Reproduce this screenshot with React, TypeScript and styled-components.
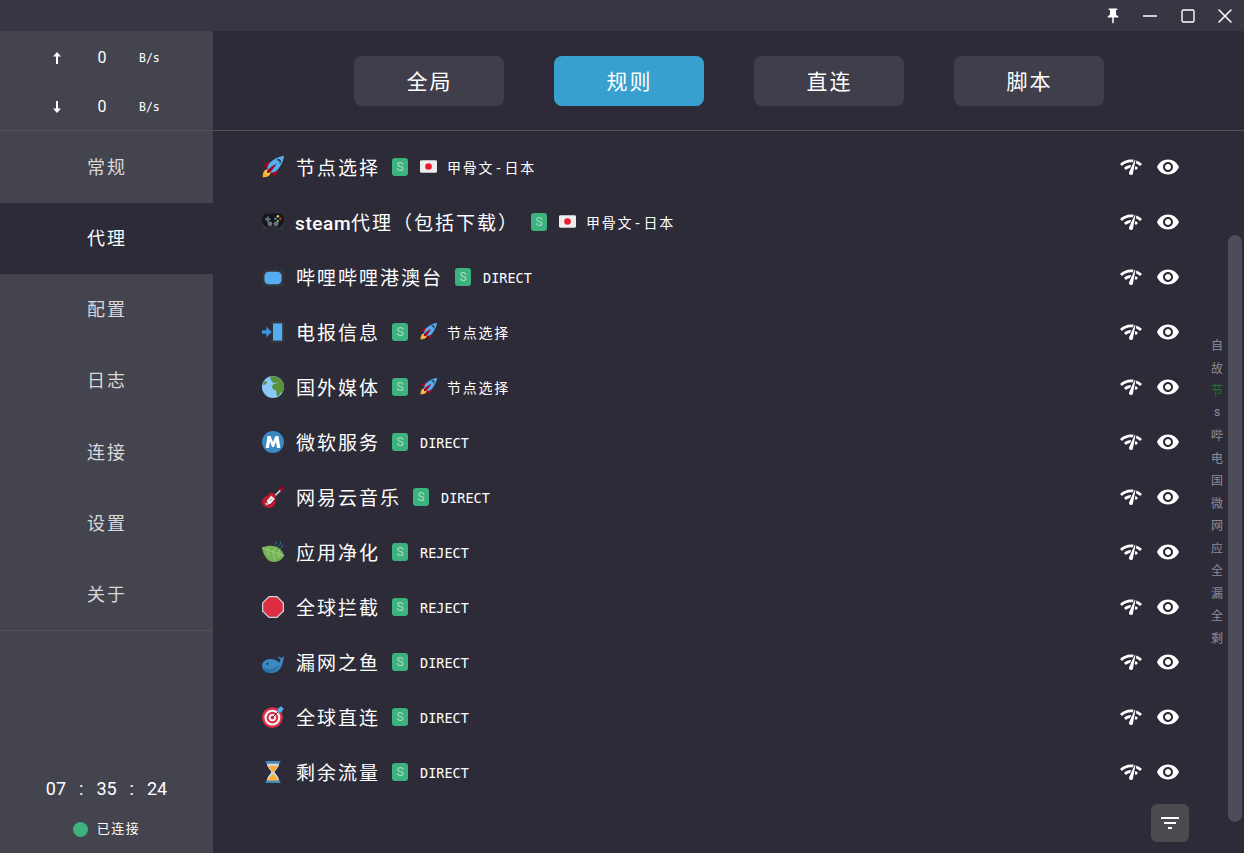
import React from "react";
import styled, { createGlobalStyle } from "styled-components";

const CJK = `"Noto Sans CJK SC"`;
const MONO = `"DejaVu Sans Mono"`;

const GlobalStyle = createGlobalStyle`
  html, body {
    margin: 0;
    height: 100%;
    overflow: hidden;
    background: #2d2b38;
  }
  * {
    box-sizing: border-box;
  }
`;

const Page = styled.div`
  display: flex;
  flex-direction: column;
  width: 100vw;
  height: 100vh;
  color: #fff;
  font-family: Roboto, ${CJK}, sans-serif;
`;

const TitleBar = styled.div`
  display: flex;
  justify-content: flex-end;
  align-items: center;
  flex: 0 0 31px;
  background: #373643;
`;

const TitleButton = styled.div`
  display: flex;
  justify-content: center;
  align-items: center;
  width: 37.5px;
  height: 31px;
`;

const Body = styled.div`
  display: flex;
  flex: 1;
  min-height: 0;
`;

const Sidebar = styled.aside`
  display: flex;
  flex-direction: column;
  flex: 0 0 213px;
  background: #2d2b38;
`;

const SpeedBlock = styled.div`
  display: flex;
  flex-direction: column;
  justify-content: center;
  gap: 28px;
  height: 100px;
  padding: 4px 0 0 47px;
  background: #44444f;
  border-bottom: 1px solid #57514f;
`;

const SpeedRow = styled.div`
  display: grid;
  grid-template-columns: 20px 20px auto;
  column-gap: 25px;
  align-items: center;
  height: 21px;
`;

const SpeedArrow = styled.span`
  display: flex;
  justify-content: center;
`;

const SpeedValue = styled.span`
  font-size: 16px;
  text-align: center;
  margin-top: -2px;
`;

const SpeedUnit = styled.span`
  font-family: ${MONO}, monospace;
  font-size: 11.5px;
  margin-left: 2px;
`;

const Nav = styled.nav`
  display: flex;
  flex-direction: column;
  height: 500px;
  background: #44444f;
  border-bottom: 1px solid #57514f;
`;

const NavItem = styled.div<{ $active?: boolean; $before?: boolean; $after?: boolean }>`
  display: flex;
  justify-content: center;
  align-items: center;
  flex: 1;
  padding: 0 0 3px 1px;
  font-size: 18px;
  letter-spacing: 2px;
  color: ${(p) => (p.$active ? "#ffffff" : "#d9d9dc")};
  background: ${(p) => (p.$active ? "#2d2b38" : "#44444f")};
  border-bottom-right-radius: ${(p) => (p.$before ? "16px" : "0")};
  border-top-right-radius: ${(p) => (p.$after ? "16px" : "0")};
  &:first-child {
    flex: 0 0 72px;
  }
`;

const SideFooter = styled.div`
  display: flex;
  flex-direction: column;
  align-items: center;
  justify-content: flex-end;
  flex: 1;
  gap: 19px;
  padding-bottom: 14px;
  background: #44444f;
`;

const Clock = styled.div`
  display: flex;
  gap: 13px;
  font-size: 18px;
  line-height: 22px;
`;

const Status = styled.div`
  display: flex;
  align-items: center;
  gap: 9px;
  font-size: 13px;
  letter-spacing: 1.5px;
  line-height: 20px;
`;

const StatusDot = styled.span`
  width: 15px;
  height: 15px;
  border-radius: 50%;
  background: #3cb37f;
`;

const Main = styled.main`
  position: relative;
  display: flex;
  flex-direction: column;
  flex: 1;
  min-width: 0;
  background: #2d2b38;
`;

const Tabs = styled.div`
  display: flex;
  justify-content: center;
  align-items: center;
  gap: 50px;
  height: 100px;
  border-bottom: 1px solid #57514f;
`;

const Tab = styled.div<{ $active?: boolean }>`
  display: flex;
  justify-content: center;
  align-items: center;
  width: 150px;
  height: 50px;
  margin-top: 1px;
  padding: 0 0 3px 2px;
  border-radius: 8px;
  font-size: 21px;
  letter-spacing: 2px;
  background: ${(p) => (p.$active ? "#37a0ce" : "#3f3e4a")};
`;

const GroupList = styled.div`
  display: flex;
  flex-direction: column;
  padding: 8px 64px 0 49px;
`;

const Row = styled.div`
  display: flex;
  align-items: center;
  gap: 12px;
  height: 55px;
`;

const RowIcon = styled.span`
  display: flex;
  flex: 0 0 22px;
  width: 22px;
  height: 22px;
`;

const GroupName = styled.span`
  padding-bottom: 1px;
  font-size: 19px;
  letter-spacing: 2px;
  white-space: nowrap;
`;

const GroupPrefix = styled.span`
  margin-left: -1px;
  font-weight: 500;
  letter-spacing: 0.6px;
`;

const Badge = styled.span`
  display: flex;
  justify-content: center;
  align-items: center;
  width: 16px;
  height: 18px;
  border-radius: 3px;
  font-size: 12px;
  color: #a8dcc2;
  background: #3cb37f;
`;

const Current = styled.span`
  display: flex;
  align-items: center;
  gap: 10px;
`;

const CurrentText = styled.span<{ $latin?: boolean }>`
  font-family: ${MONO}, ${CJK}, sans-serif;
  font-size: ${(p) => (p.$latin ? "13.5px" : "14px")};
  letter-spacing: ${(p) => (p.$latin ? "0" : "1.75px")};
  padding-top: ${(p) => (p.$latin ? "2px" : "0")};
`;

const CurrentIcon = styled.span`
  display: flex;
  width: 17px;
  height: 17px;
  align-items: center;
`;

const Actions = styled.div`
  display: flex;
  align-items: center;
  gap: 13px;
  margin-left: auto;
`;

const IndexRail = styled.div`
  position: absolute;
  top: 302.5px;
  right: 20px;
  display: flex;
  flex-direction: column;
  align-items: center;
  width: 14px;
  font-size: 12px;
`;

const IndexItem = styled.span<{ $active?: boolean }>`
  display: flex;
  justify-content: center;
  align-items: center;
  height: 22.5px;
  color: ${(p) => (p.$active ? "#1f7a2c" : "#8d8c96")};
`;

const ScrollThumb = styled.div`
  position: absolute;
  top: 204px;
  right: 2px;
  width: 14px;
  height: 587px;
  border-radius: 7px;
  background: #4d4c5a;
`;

const FilterButton = styled.div`
  position: absolute;
  right: 55px;
  bottom: 11px;
  display: flex;
  justify-content: center;
  align-items: center;
  width: 38px;
  height: 38px;
  border-radius: 6px;
  background: #4a4a4f;
`;

const PinIcon = () => (
  <svg width="18" height="18" viewBox="0 0 24 24" fill="#fff">
    <path d="M16 9V4h1c.55 0 1-.45 1-1s-.45-1-1-1H7c-.55 0-1 .45-1 1s.45 1 1 1h1v5c0 1.66-1.34 3-3 3v2h5.97v7l1 1 1-1v-7H19v-2c-1.66 0-3-1.34-3-3z" />
  </svg>
);

const MinIcon = () => (
  <svg width="14" height="14" viewBox="0 0 14 14">
    <path d="M0.5 7h13" stroke="#fff" strokeWidth="1.6" strokeLinecap="round" />
  </svg>
);

const MaxIcon = () => (
  <svg width="14" height="14" viewBox="0 0 14 14" fill="none">
    <rect x="1" y="1" width="12" height="12" rx="1.5" stroke="#fff" strokeWidth="1.4" />
  </svg>
);

const CloseIcon = () => (
  <svg width="14" height="14" viewBox="0 0 14 14">
    <path d="M1 1l12 12M13 1L1 13" stroke="#fff" strokeWidth="1.5" strokeLinecap="round" />
  </svg>
);

const ArrowIcon = ({ down }: { down?: boolean }) => (
  <svg width="10" height="12" viewBox="0 0 10 12" fill="#fff">
    {down ? <path d="M4 0h2v7.5h3L5 12 1 7.500h3z" /> : <path d="M5 0l4 4.500H6V12H4V4.500H1z" />}
  </svg>
);

const NetworkIcon = () => (
  <svg width="24" height="24" viewBox="0 0 24 24" fill="#fff">
    <path d="M15.9 5c-.17 0-.32.09-.41.23l-.07.15-5.18 11.65c-.16.29-.26.61-.26.96 0 1.11.9 2.01 2.01 2.01.96 0 1.77-.68 1.96-1.59l.01-.03L16.4 5.5c0-.28-.22-.5-.5-.5zM1 9l2 2c2.88-2.88 6.79-4.06 10.53-3.55l1.19-2.68C9.89 3.84 4.74 5.27 1 9zm20 2l2-2c-1.64-1.64-3.55-2.82-5.59-3.57l-.53 2.82c1.5.62 2.9 1.53 4.12 2.75zm-4 4l2-2c-.8-.8-1.7-1.42-2.66-1.89l-.55 2.92c.43.28.84.59 1.21.97zM5 13l2 2c1.13-1.13 2.56-1.79 4.03-2l1.28-2.88c-2.63-.08-5.3.87-7.31 2.88z" />
  </svg>
);

const EyeIcon = () => (
  <svg width="24" height="24" viewBox="0 0 24 24" fill="#fff">
    <path d="M12 4.5C7 4.5 2.73 7.61 1 12c1.73 4.39 6 7.5 11 7.5s9.27-3.11 11-7.5c-1.73-4.39-6-7.5-11-7.5zM12 17c-2.76 0-5-2.24-5-5s2.24-5 5-5 5 2.24 5 5-2.24 5-5 5zm0-8c-1.66 0-3 1.34-3 3s1.34 3 3 3 3-1.34 3-3-1.34-3-3-3z" />
  </svg>
);

const FilterIcon = () => (
  <svg width="24" height="24" viewBox="0 0 24 24" fill="#fff">
    <path d="M10 18h4v-2h-4v2zM3 6v2h18V6H3zm3 7h12v-2H6v2z" />
  </svg>
);

// twemoji-looking pictures for the group icons
const Emoji = ({ children, size = 22 }: { children: React.ReactNode; size?: number }) => (
  <svg width={size} height={size} viewBox="0 0 36 36">
    {children}
  </svg>
);

const emojis: Record<string, React.ReactNode> = {
  rocket: (
    <>
      <path fill="#a0041e" d="M1 17l8-7 16 1 1 16-7 8s0-6-6-12-12-6-12-6z" />
      <path fill="#ffac33" d="M1 35s0-8 3-11 11-3 11-3 0 8-3 11-11 3-11 3z" />
      <circle fill="#ffcc4d" cx="9" cy="27" r="4" />
      <path fill="#55acee" d="M36 0s-10 0-22 10c-6 5-6 14-4 16s11 2 16-4C36 10 36 0 36 0z" />
      <path fill="#292f33" d="M27 5c-1.600 0-3 1-3.600 2.400.5-.2 1-.4 1.600-.4 2.200 0 4 1.800 4 4 0 .6-.1 1.100-.4 1.600 1.400-.6 2.400-2 2.400-3.600 0-2.200-1.800-4-4-4z" />
      <path fill="#a0041e" d="M8 28s0-4 1-5 13-11 14-10-9 13-10 14-5 1-5 1z" />
    </>
  ),
  gamepad: (
    <>
      <path d="M1 33l0-16 8 8-3 6zM35 33l0-16-8 8 3 6z" fill="#31373d" />
      <path d="M9 4h18c5 0 9 4 9 10s-4 12-9 12c-2 0-3-1-4-2H13c-1 1-2 2-4 2-5 0-9-6-9-12S4 4 9 4z" fill="#14171a" />
      <path d="M5 12h3V9h3v3h3v3h-3v3H8v-3H5z" fill="#66757f" />
      <circle cx="26" cy="8.500" r="2" fill="#ffcc4d" />
      <circle cx="30" cy="12.500" r="2" fill="#dd2e44" />
      <circle cx="22" cy="12.500" r="2" fill="#3b88c3" />
      <circle cx="26" cy="16.500" r="2" fill="#77b255" />
      <circle cx="13" cy="21" r="4" fill="#66757f" />
      <circle cx="23" cy="21" r="4" fill="#66757f" />
    </>
  ),
  tv: (
    <>
      <path d="M12 1l6 6 6-6" stroke="#31373d" strokeWidth="1.500" fill="none" />
      <rect x="1" y="6" width="34" height="28" rx="2" fill="#31373d" />
      <rect x="4" y="9.500" width="28" height="20.500" rx="7" fill="#55acee" />
    </>
  ),
  phone: (
    <>
      <rect x="15" y="0" width="21" height="36" rx="3" fill="#31373d" />
      <rect x="18" y="4" width="15" height="28" fill="#55acee" />
      <path d="M0 15h7v-6l9 9-9 9v-6H0z" fill="#3b94d9" />
    </>
  ),
  globe: (
    <>
      <circle cx="18" cy="18" r="18" fill="#88c9f9" />
      <path d="M14 1c6-2 15 0 19 7 2 3 3 7 3 10 0 3-1 6-2 8-1 1-3 0-4 2-1 3-3 6-5 5-2-2-1-6-2-9-1-2-5-1-6-4-1-3 0-6 3-7l6-2c-2-1-5 1-7 0-3-1-2-3-4-4-1-1-2-4-1-6z" fill="#5c913b" />
      <path d="M4 9c2-1 3-1 4 1 0 2-2 4-5 5-2 0-1-4 1-6z" fill="#5c913b" />
    </>
  ),
  metro: (
    <>
      <circle cx="18" cy="18" r="18" fill="#3b88c3" />
      <path d="M6 28L9 8h5l4 10 4-10h5l3 20h-5.500l-1.500-11-3.500 9h-3l-3.500-9-1.500 11z" fill="#fff" />
    </>
  ),
  guitar: (
    <>
      <path d="M31 4L17 18l2 2L33 6z" fill="#ccd6dd" />
      <path d="M29 3l4-3 3 3-2 5-3 0-2-2z" fill="#a0041e" />
      <ellipse cx="11" cy="26" rx="11" ry="10" fill="#be1931" />
      <ellipse cx="16" cy="18" rx="7" ry="7" fill="#be1931" />
      <path d="M8 24l7-8 6 5-7 8-4 1z" fill="#f5f8fa" />
      <path d="M8 32l-3-3 2-2 3 3z" fill="#ccd6dd" />
      <path d="M12 25l5-5" stroke="#66757f" strokeWidth="1.500" />
    </>
  ),
  leaf: (
    <>
      <path d="M0 11c7-3 15-4 22-2 7 2 12 8 14 15-4 8-12 11-20 10C8 33 2 22 0 11z" fill="#77b255" />
      <path d="M0 11c12 4 26 10 36 13M9 15l3-5M9 15l2 10M18 19l4-8M18 19l3 11M27 21l2-7M27 21l1 7" stroke="#a6d388" strokeWidth="1.300" fill="none" />
      <path d="M21 6c2-2 3-4 2-6M26 9c3-2 5-4 4-8M30 12c2-1 4-2 4-5" stroke="#3b88c3" strokeWidth="1.200" fill="none" strokeLinecap="round" />
    </>
  ),
  stop: (
    <>
      <path d="M11 0h14l11 11v14L25 36H11L0 25V11z" fill="#ccd6dd" />
      <path d="M11.800 2h12.400L34 11.800v12.400L24.200 34H11.800L2 24.200V11.800z" fill="#dd2e44" />
    </>
  ),
  whale: (
    <>
      <path d="M0 24C0 17 7 13 14 13c6 0 9 2 13 5 2 1 3 0 3-2 0-2-2-4-4-6 2-1 4 0 6 2 1-2 2-3 4-3 0 3-1 6-2 9-1 9-8 18-18 18C7 36 0 31 0 24z" fill="#3b88c3" />
      <path d="M0 26c5 3 11 4 16 3 5-1 9-3 13-6-2 7-9 13-16 13-6 0-11-4-13-10z" fill="#269" opacity=".6" />
      <circle cx="9" cy="21" r="1.500" fill="#14171a" />
    </>
  ),
  target: (
    <>
      <circle cx="17" cy="19" r="17" fill="#dd2e44" />
      <circle cx="17" cy="19" r="13" fill="#f5f8fa" />
      <circle cx="17" cy="19" r="9.500" fill="#dd2e44" />
      <circle cx="17" cy="19" r="6" fill="#f5f8fa" />
      <circle cx="17" cy="19" r="3" fill="#dd2e44" />
      <path d="M17 19L30 6" stroke="#31373d" strokeWidth="1.500" />
      <path d="M26 4l6-4 1 3 3 1-4 6-5 1-1-3z" fill="#55acee" />
    </>
  ),
  hourglass: (
    <>
      <rect x="6" y="0" width="24" height="4" rx="1" fill="#3b88c3" />
      <rect x="6" y="32" width="24" height="4" rx="1" fill="#3b88c3" />
      <path d="M8 4h20c0 7-7 11-7 14s7 7 7 14H8c0-7 7-11 7-14S8 11 8 4z" fill="#ccd6dd" />
      <path d="M10 8h16c-2 4-6 7-7 10h-2c-1-3-5-6-7-10zM18 21c1 2 7 6 8 11H10c1-5 7-9 8-11z" fill="#ffac33" />
    </>
  ),
  japan: (
    <>
      <rect x="0" y="5" width="36" height="26" rx="3" fill="#eeeeee" />
      <circle cx="18" cy="18" r="7" fill="#ed1b2e" />
    </>
  ),
};

type Group = {
  icon: string;
  prefix?: string;
  name: string;
  now: string;
  nowIcon?: string;
};

const groups: Group[] = [
  { icon: "rocket", name: "节点选择", now: "甲骨文-日本", nowIcon: "japan" },
  { icon: "gamepad", prefix: "steam", name: "代理（包括下载）", now: "甲骨文-日本", nowIcon: "japan" },
  { icon: "tv", name: "哔哩哔哩港澳台", now: "DIRECT" },
  { icon: "phone", name: "电报信息", now: "节点选择", nowIcon: "rocket" },
  { icon: "globe", name: "国外媒体", now: "节点选择", nowIcon: "rocket" },
  { icon: "metro", name: "微软服务", now: "DIRECT" },
  { icon: "guitar", name: "网易云音乐", now: "DIRECT" },
  { icon: "leaf", name: "应用净化", now: "REJECT" },
  { icon: "stop", name: "全球拦截", now: "REJECT" },
  { icon: "whale", name: "漏网之鱼", now: "DIRECT" },
  { icon: "target", name: "全球直连", now: "DIRECT" },
  { icon: "hourglass", name: "剩余流量", now: "DIRECT" },
];

const navItems = ["常规", "代理", "配置", "日志", "连接", "设置", "关于"];
const tabs = ["全局", "规则", "直连", "脚本"];
const indexChars = ["自", "故", "节", "s", "哔", "电", "国", "微", "网", "应", "全", "漏", "全", "剩"];

function GroupRow({ group }: { group: Group }) {
  const latin = group.now === "DIRECT" || group.now === "REJECT";
  return (
    <Row>
      <RowIcon>
        <Emoji>{emojis[group.icon]}</Emoji>
      </RowIcon>
      <GroupName>
        {group.prefix && <GroupPrefix>{group.prefix}</GroupPrefix>}
        {group.name}
      </GroupName>
      <Badge>S</Badge>
      <Current>
        {group.nowIcon && (
          <CurrentIcon>
            <Emoji size={17}>{emojis[group.nowIcon]}</Emoji>
          </CurrentIcon>
        )}
        <CurrentText $latin={latin}>{group.now}</CurrentText>
      </Current>
      <Actions>
        <NetworkIcon />
        <EyeIcon />
      </Actions>
    </Row>
  );
}

export default function App() {
  const activeNav = 1;
  return (
    <Page>
      <GlobalStyle />
      <TitleBar>
        <TitleButton>
          <PinIcon />
        </TitleButton>
        <TitleButton>
          <MinIcon />
        </TitleButton>
        <TitleButton>
          <MaxIcon />
        </TitleButton>
        <TitleButton>
          <CloseIcon />
        </TitleButton>
      </TitleBar>
      <Body>
        <Sidebar>
          <SpeedBlock>
            <SpeedRow>
              <SpeedArrow>
                <ArrowIcon />
              </SpeedArrow>
              <SpeedValue>0</SpeedValue>
              <SpeedUnit>B/s</SpeedUnit>
            </SpeedRow>
            <SpeedRow>
              <SpeedArrow>
                <ArrowIcon down />
              </SpeedArrow>
              <SpeedValue>0</SpeedValue>
              <SpeedUnit>B/s</SpeedUnit>
            </SpeedRow>
          </SpeedBlock>
          <Nav>
            {navItems.map((item, i) => (
              <NavItem
                key={item}
                $active={i === activeNav}
                $before={i === activeNav - 1}
                $after={i === activeNav + 1}
              >
                {item}
              </NavItem>
            ))}
          </Nav>
          <SideFooter>
            <Clock>
              <span>07</span>
              <span>:</span>
              <span>35</span>
              <span>:</span>
              <span>24</span>
            </Clock>
            <Status>
              <StatusDot />
              已连接
            </Status>
          </SideFooter>
        </Sidebar>
        <Main>
          <Tabs>
            {tabs.map((tab) => (
              <Tab key={tab} $active={tab === "规则"}>
                {tab}
              </Tab>
            ))}
          </Tabs>
          <GroupList>
            {groups.map((group) => (
              <GroupRow key={group.icon} group={group} />
            ))}
          </GroupList>
          <IndexRail>
            {indexChars.map((c, i) => (
              <IndexItem key={i} $active={i === 2}>
                {c}
              </IndexItem>
            ))}
          </IndexRail>
          <ScrollThumb />
          <FilterButton>
            <FilterIcon />
          </FilterButton>
        </Main>
      </Body>
    </Page>
  );
}
